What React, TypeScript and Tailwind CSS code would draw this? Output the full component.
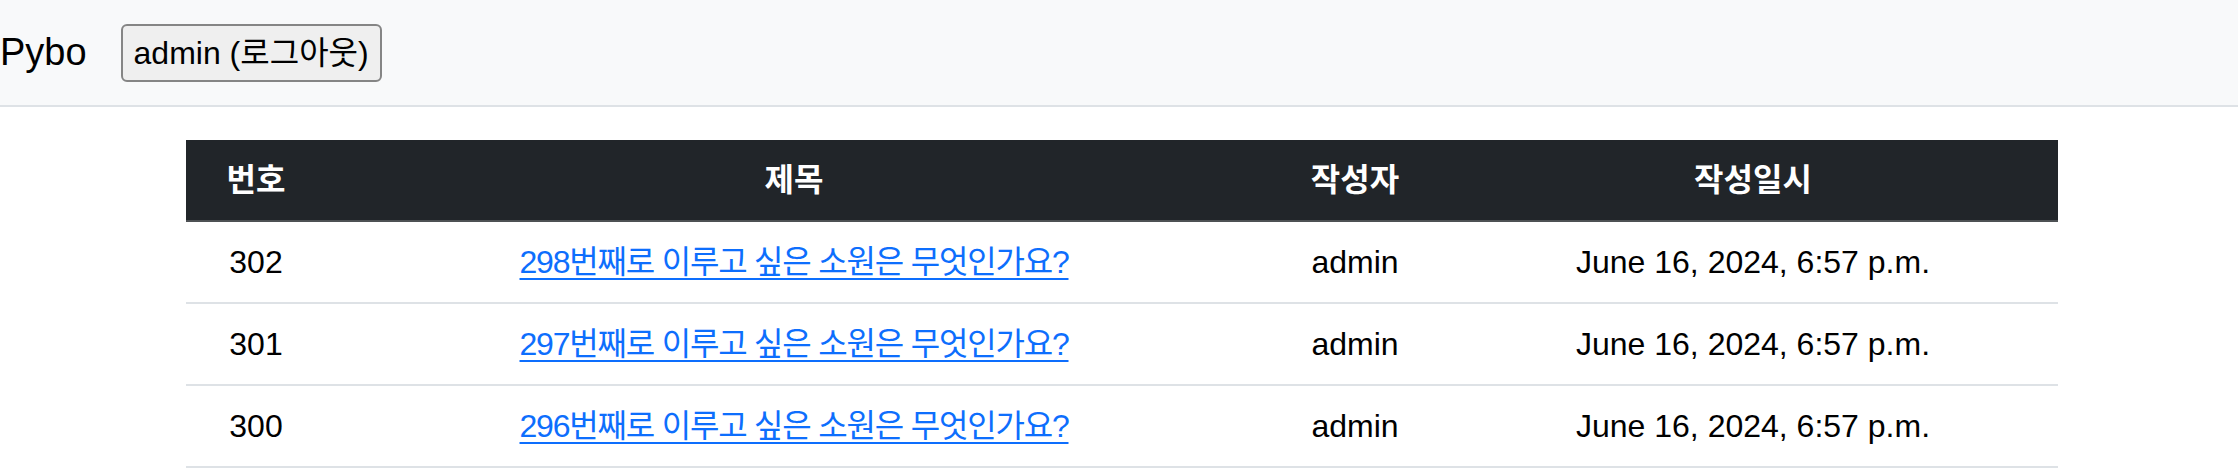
import React from "react";

const rows = [
  { id: 302, title: "298번째로 이루고 싶은 소원은 무엇인가요?" },
  { id: 301, title: "297번째로 이루고 싶은 소원은 무엇인가요?" },
  { id: 300, title: "296번째로 이루고 싶은 소원은 무엇인가요?" },
];

export default function App() {
  return (
    <div
      className="min-h-[470px] bg-white text-[#212529]"
      style={{ fontFamily: '"Liberation Sans", "Noto Sans CJK KR", Arial, sans-serif' }}
    >
      <nav className="h-[107px] bg-[#f8f9fa] border-b-2 border-[#dee2e6] flex items-center">
        <span className="text-[38px] leading-none ml-[0px] mr-[34px] text-[#000] pb-[2px]">Pybo</span>
        <button className="w-[261px] h-[58px] border-2 border-[#858585] rounded-[6px] bg-[#efefef] text-[32px] leading-none text-black flex items-center justify-center">
          admin (로그아웃)
        </button>
      </nav>
      <div className="w-[1872px] ml-[186px] mt-[33px]">
        <table className="w-full table-fixed border-separate border-spacing-0 text-[32px] leading-[48px]">
          <colgroup>
            <col className="w-[140px]" />
            <col className="w-[936px]" />
            <col className="w-[186px]" />
            <col className="w-[610px]" />
          </colgroup>
          <thead>
            <tr className="bg-[#212529] text-white">
              <th className="py-[16px] font-bold border-b-2 border-[#4d5154]">번호</th>
              <th className="py-[16px] font-bold border-b-2 border-[#4d5154]">제목</th>
              <th className="py-[16px] font-bold border-b-2 border-[#4d5154]">작성자</th>
              <th className="py-[16px] font-bold border-b-2 border-[#4d5154]">작성일시</th>
            </tr>
          </thead>
          <tbody>
            {rows.map((r) => (
              <tr key={r.id} className="text-center">
                <td className="py-[16px] border-b-2 border-[#dee2e6] text-black">{r.id}</td>
                <td className="py-[16px] border-b-2 border-[#dee2e6]">
                  <a
                    href="#"
                    className="text-[#0d6efd] underline decoration-2 underline-offset-[5px] tracking-[-1.2px]"
                  >
                    {r.title}
                  </a>
                </td>
                <td className="py-[16px] border-b-2 border-[#dee2e6] text-black">admin</td>
                <td className="py-[16px] border-b-2 border-[#dee2e6] text-black">June 16, 2024, 6:57 p.m.</td>
              </tr>
            ))}
          </tbody>
        </table>
      </div>
    </div>
  );
}
